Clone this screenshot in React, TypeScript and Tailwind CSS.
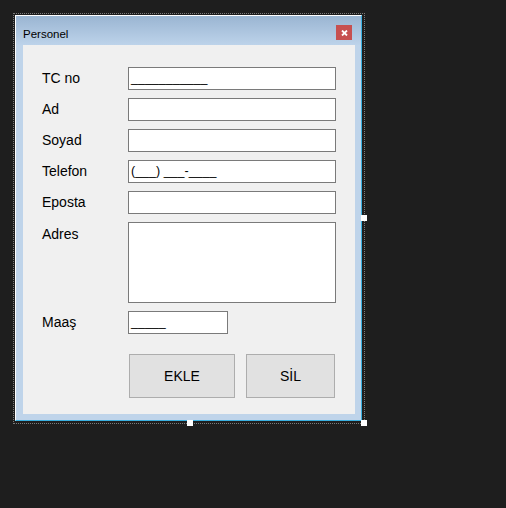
import React from 'react'

const fields = [
  { label: 'TC no', mask: '___________' },
  { label: 'Ad', mask: '' },
  { label: 'Soyad', mask: '' },
  { label: 'Telefon', mask: '(___) ___-____' },
  { label: 'Eposta', mask: '' },
]

function TextBox({ value, className = '' }: { value?: string; className?: string }) {
  return (
    <div
      className={`h-[23px] border border-[#7a7a7a] bg-white pl-[2px] text-[12.5px] leading-[21px] text-black whitespace-pre ${className}`}
    >
      {value}
    </div>
  )
}

function Label({ text, className = '' }: { text: string; className?: string }) {
  return <div className={`self-start text-[14px] leading-[23px] text-black ${className}`}>{text}</div>
}

export default function App() {
  return (
    <div className="relative h-[508px] w-[506px] bg-[#1e1e1e] pl-[13px] pt-[13px] font-['Liberation_Sans',Arial,sans-serif]">
      {/* designer selection frame */}
      <div className="h-[411px] w-[352px] border border-dotted border-[#7a7a7a] pl-px pt-px">
        {/* form window */}
        <div className="flex h-[406px] w-[347px] flex-col border border-l-white border-t-white border-r-[#3ab0e0] border-b-[#3ab0e0] bg-[#bfd4ea]">
          {/* title bar */}
          <div className="flex h-[29px] shrink-0 items-start bg-gradient-to-b from-[#9ab5d2] to-[#bdd3ea] pl-[7px] pr-[9px]">
            <span className="mt-[11px] text-[11.5px] leading-[14px] text-black">Personel</span>
            <div className="ml-auto mt-[9px] flex h-[15px] w-[16px] items-center justify-center bg-[#c75050]">
              <svg width="7" height="6" viewBox="0 0 7 6">
                <path d="M1 0.5 L6 5.5 M6 0.5 L1 5.5" stroke="white" strokeWidth="1.8" />
              </svg>
            </div>
          </div>

          {/* client area */}
          <div className="ml-[7px] h-[369px] w-[332px] bg-[#f0f0f0] pl-[19px] pt-[22px]">
            <div className="grid grid-cols-[86px_208px] gap-y-[8px]">
              {fields.map((f) => (
                <React.Fragment key={f.label}>
                  <Label text={f.label} />
                  <TextBox value={f.mask} />
                </React.Fragment>
              ))}
              <Label text="Adres" className="pt-px" />
              <div className="h-[81px] border border-[#7a7a7a] bg-white" />
              <Label text="Maaş" />
              <TextBox value="_____" className="w-[100px]" />
              <div className="col-start-2 mt-[12px] flex gap-[11px] pl-px">
                <button className="h-[44px] w-[106px] border border-[#adadad] bg-[#e1e1e1] text-[14px] text-black">
                  EKLE
                </button>
                <button className="h-[44px] w-[89px] border border-[#adadad] bg-[#e1e1e1] text-[14px] text-black">
                  SİL
                </button>
              </div>
            </div>
          </div>
        </div>
      </div>

      {/* resize handles */}
      <div className="absolute left-[361px] top-[215px] h-[6px] w-[6px] bg-white" />
      <div className="absolute left-[187px] top-[420px] h-[6px] w-[6px] bg-white" />
      <div className="absolute left-[361px] top-[420px] h-[6px] w-[6px] bg-white" />
    </div>
  )
}
